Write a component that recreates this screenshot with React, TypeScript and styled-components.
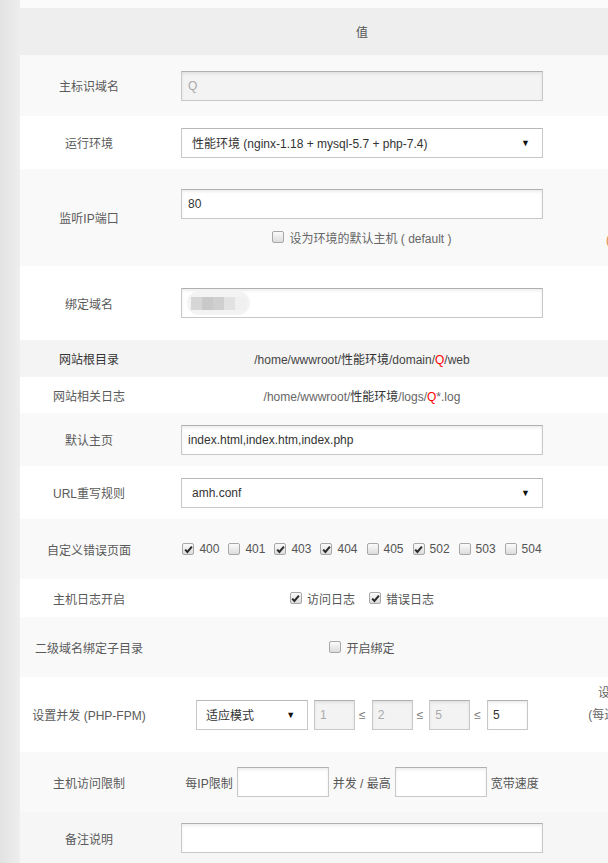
import React from "react"
import styled, { createGlobalStyle } from "styled-components"

const GlobalStyle = createGlobalStyle`
  html, body {
    margin: 0;
    padding: 0;
  }
  body {
    background: #fbfbfb;
    font-family: "Liberation Sans", "Noto Sans CJK SC", sans-serif;
    font-size: 12px;
    color: #555;
    overflow: hidden;
  }
`

const CheckMark = () => (
  <svg width="9" height="9" viewBox="0 0 9 9">
    <path d="M1.2 4.6 L3.4 7 L7.9 1.6" fill="none" stroke="#2b2b2b" strokeWidth="2" />
  </svg>
)

const CheckBox = ({ checked, label, tone }: { checked?: boolean; label: React.ReactNode; tone?: string }) => (
  <CheckItem $tone={tone}>
    <Box>{checked && <CheckMark />}</Box>
    <span>{label}</span>
  </CheckItem>
)

const errorPages = [
  { code: "400", on: true },
  { code: "401", on: false },
  { code: "403", on: true },
  { code: "404", on: true },
  { code: "405", on: false },
  { code: "502", on: true },
  { code: "503", on: false },
  { code: "504", on: false },
]

const App = () => {
  return (
    <>
      <GlobalStyle />
      <Page>
        <Shade />
        <Main>
          <Table>
            <Header>
              <div />
              <HeadCell>值</HeadCell>
              <div />
            </Header>

            <Row $h={61} $bg="#f9f9f9">
              <Label>主标识域名</Label>
              <Value>
                <Input $disabled readOnly value="Q" />
              </Value>
              <Note />
            </Row>

            <Row $h={53} $bg="#fff">
              <Label>运行环境</Label>
              <Value>
                <Select $w={362}>
                  <span>性能环境 (nginx-1.18 + mysql-5.7 + php-7.4)</span>
                  <Arrow>▼</Arrow>
                </Select>
              </Value>
              <Note />
            </Row>

            <Row $h={97} $bg="#f9f9f9">
              <Label>监听IP端口</Label>
              <Value>
                <Input readOnly value="80" />
                <SubLine>
                  <CheckBox label="设为环境的默认主机 ( default )" tone="#666" />
                </SubLine>
              </Value>
              <Note>
                端口
                <br />
                80
                <br />
                <Orange>(可选项)</Orange>
              </Note>
            </Row>

            <Row $h={74} $bg="#fff">
              <Label>绑定域名</Label>
              <Value>
                <InputShell>
                  <Mosaic>
                    <Tile $c="#d6d6d6" />
                    <Tile $c="#c9c9c9" />
                    <Tile $c="#cfcfcf" />
                    <Tile $c="#e2e2e2" />
                    <Tile $c="#f0f0f0" />
                  </Mosaic>
                </InputShell>
              </Value>
              <Note />
            </Row>

            <Row $h={37} $bg="#f4f4f4">
              <Label $strong>网站根目录</Label>
              <Value>
                <Path $strong>
                  /home/wwwroot/<Dark>性能环境</Dark>/domain/<Red>Q</Red>/web
                </Path>
              </Value>
              <Note />
            </Row>

            <Row $h={36} $bg="#fff">
              <Label>网站相关日志</Label>
              <Value>
                <Path>
                  /home/wwwroot/<Dark>性能环境</Dark>/logs/<Red>Q</Red>*.log
                </Path>
              </Value>
              <Note />
            </Row>

            <Row $h={53} $bg="#f9f9f9">
              <Label>默认主页</Label>
              <Value>
                <Input readOnly value="index.html,index.htm,index.php" />
              </Value>
              <Note />
            </Row>

            <Row $h={53} $bg="#fff">
              <Label>URL重写规则</Label>
              <Value>
                <Select $w={362}>
                  <span>amh.conf</span>
                  <Arrow>▼</Arrow>
                </Select>
              </Value>
              <Note />
            </Row>

            <Row $h={60} $bg="#f9f9f9">
              <Label>自定义错误页面</Label>
              <Value>
                <CheckGroup $gap={9}>
                  {errorPages.map(p => (
                    <CheckBox key={p.code} checked={p.on} label={p.code} />
                  ))}
                </CheckGroup>
              </Value>
              <Note />
            </Row>

            <Row $h={38} $bg="#fff">
              <Label>主机日志开启</Label>
              <Value>
                <CheckGroup $gap={14}>
                  <CheckBox checked label="访问日志" />
                  <CheckBox checked label="错误日志" />
                </CheckGroup>
              </Value>
              <Note />
            </Row>

            <Row $h={60} $bg="#f9f9f9">
              <Label>二级域名绑定子目录</Label>
              <Value>
                <CheckBox label="开启绑定" />
              </Value>
              <Note />
            </Row>

            <Row $h={75} $bg="#fff">
              <Label>设置并发 (PHP-FPM)</Label>
              <Value>
                <Inline $gap={4}>
                  <Select $w={112} $pad={9} $after={2}>
                    <span>适应模式</span>
                    <Arrow>▼</Arrow>
                  </Select>
                  <Small $disabled readOnly value="1" />
                  <Le>≤</Le>
                  <Small $disabled readOnly value="2" />
                  <Le>≤</Le>
                  <Small $disabled readOnly value="5" />
                  <Le>≤</Le>
                  <Small readOnly value="5" />
                </Inline>
              </Value>
              <Note>
                设置进程数
                <br />
                (每进程约20M)
                <br />
                默认5
              </Note>
            </Row>

            <Row $h={60} $bg="#f9f9f9">
              <Label>主机访问限制</Label>
              <Value>
                <Inline $gap={4}>
                  <span>每IP限制</span>
                  <Input $w={92} readOnly value="" />
                  <span>并发 / 最高</span>
                  <Input $w={92} readOnly value="" />
                  <span>宽带速度</span>
                </Inline>
              </Value>
              <Note />
            </Row>

            <Row $h={52} $bg="#f6f6f6">
              <Label>备注说明</Label>
              <Value>
                <Input readOnly value="" />
              </Value>
              <Note />
            </Row>
          </Table>
        </Main>
      </Page>
    </>
  )
}

export default App

const Page = styled.div`
  display: flex;
  width: 608px;
  height: 863px;
  overflow: hidden;
`
const Shade = styled.div`
  flex: 0 0 20px;
  background: linear-gradient(to right, #e2e2e2, #eeeeee);
`
const Main = styled.div`
  flex: 0 0 auto;
  padding-top: 8px;
`
const Table = styled.div`
  width: 670px;
`
const Header = styled.div`
  display: grid;
  grid-template-columns: 138px 408px 124px;
  height: 47px;
  align-items: center;
  background: #eeeeee;
`
const HeadCell = styled.div`
  text-align: center;
  color: #555;
`
const Row = styled.div<{ $h: number; $bg: string }>`
  display: grid;
  grid-template-columns: 138px 408px 124px;
  height: ${p => p.$h}px;
  align-items: center;
  background: ${p => p.$bg};
`
const Label = styled.div<{ $strong?: boolean }>`
  text-align: center;
  color: ${p => (p.$strong ? "#333" : "#5a5a5a")};
  white-space: nowrap;
`
const Value = styled.div`
  display: flex;
  flex-direction: column;
  align-items: center;
  justify-content: center;
`
const Note = styled.div`
  text-align: center;
  line-height: 22px;
  color: #666;
  white-space: nowrap;
`
const Orange = styled.span`
  color: #e0883a;
`
const fieldBorder = `
  border: 1px solid #c8c8c8;
  border-top-color: #b0b0b0;
  box-shadow: inset 0 2px 3px rgba(0, 0, 0, 0.07);
`
const Input = styled.input<{ $w?: number; $disabled?: boolean }>`
  box-sizing: border-box;
  width: ${p => p.$w || 362}px;
  height: 30px;
  padding: 0 6px;
  margin: 0;
  ${fieldBorder}
  background: ${p => (p.$disabled ? "#f3f3f3" : "#fff")};
  color: ${p => (p.$disabled ? "#aaa" : "#333")};
  font-family: "Liberation Sans", "Noto Sans CJK SC", sans-serif;
  font-size: 12px;
  outline: none;
`
const Small = styled(Input)`
  width: 41px;
  padding: 0 5px;
`
const InputShell = styled.div`
  box-sizing: border-box;
  width: 362px;
  height: 30px;
  padding: 0 5px;
  ${fieldBorder}
  background: #fff;
  display: flex;
  align-items: center;
`
const Mosaic = styled.div`
  display: flex;
  align-items: center;
  height: 24px;
  padding: 0 4px;
  border-radius: 12px;
  background: #f3f3f3;
  filter: blur(0.6px);
`
const Tile = styled.div<{ $c: string }>`
  width: 11px;
  height: 13px;
  background: ${p => p.$c};
`
const Select = styled.div<{ $w: number; $pad?: number; $after?: number }>`
  box-sizing: border-box;
  width: ${p => p.$w}px;
  height: 30px;
  padding: 0 12px 0 ${p => p.$pad || 10}px;
  margin-right: ${p => p.$after || 0}px;
  border: 1px solid #c8c8c8;
  border-top-color: #b8b8b8;
  background: #fff;
  color: #333;
  display: flex;
  align-items: center;
  justify-content: space-between;
  white-space: nowrap;
`
const Arrow = styled.span`
  font-size: 9px;
  color: #111;
`
const SubLine = styled.div`
  margin-top: 10px;
`
const CheckItem = styled.label<{ $tone?: string }>`
  display: inline-flex;
  align-items: center;
  gap: 5px;
  color: ${p => p.$tone || "#555"};
  white-space: nowrap;
`
const Box = styled.span`
  box-sizing: border-box;
  width: 12px;
  height: 12px;
  border: 1px solid #a8a8a8;
  border-radius: 2px;
  background: linear-gradient(#fbfbfb, #dcdcdc);
  display: inline-flex;
  align-items: center;
  justify-content: center;
`
const CheckGroup = styled.div<{ $gap: number }>`
  display: flex;
  align-items: center;
  gap: ${p => p.$gap}px;
`
const Inline = styled.div<{ $gap?: number }>`
  display: flex;
  align-items: center;
  gap: ${p => p.$gap || 6}px;
  white-space: nowrap;
`
const Le = styled.span`
  margin-right: 2px;
  color: #777;
  font-size: 12px;
`
const Path = styled.div<{ $strong?: boolean }>`
  color: ${p => (p.$strong ? "#444" : "#666")};
  white-space: nowrap;
`
const Dark = styled.span`
  color: #333;
`
const Red = styled.span`
  color: #f00;
`
